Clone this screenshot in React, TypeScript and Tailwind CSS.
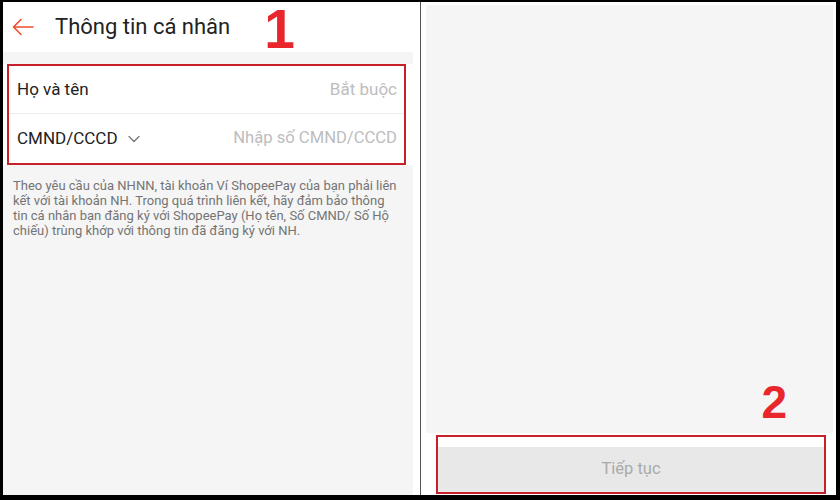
import React from "react";

export default function App() {
  return (
    <div className="w-[840px] h-[500px] bg-black flex pt-[2px] pl-[3px] pr-[4px] pb-[5px]" style={{ fontFamily: "Roboto, 'Noto Sans', sans-serif" }}>
      {/* Left panel */}
      <div className="w-[417px] h-full bg-white flex flex-col pr-[7px]">
        <div className="h-[50px] flex items-center shrink-0">
          <svg className="ml-[8px]" width="24" height="20" viewBox="0 0 24 20" fill="none" stroke="#ee4d2d" strokeWidth="1.6" strokeLinecap="round" strokeLinejoin="round">
            <path d="M22 10H2.5M10 2.5L2.5 10L10 17.5" />
          </svg>
          <span className="ml-[20px] text-[22px] text-[#222] leading-none">Thông tin cá nhân</span>
          <span className="ml-[34px] mt-[3px] text-[55px] font-bold text-[#e8262b] leading-[44px]" style={{ fontFamily: "'Liberation Sans', Arial, sans-serif" }}>1</span>
        </div>
        <div className="h-[12px] bg-[#f5f5f5] shrink-0" />
        <div className="flex-1 bg-[#f5f5f5] flex flex-col">
          <div className="bg-white pl-[4px] pr-[7px] shrink-0">
            <div className="border-[2px] border-[#c8202a] bg-white h-[101px] flex flex-col">
              <div className="h-[48px] flex items-center justify-between pl-[8px] pr-[7px] border-b border-[#ececec]">
                <span className="text-[17px] text-[#222]">Họ và tên</span>
                <span className="text-[17px] text-[#bdbdbd]">Bắt buộc</span>
              </div>
              <div className="flex-1 flex items-center justify-between pl-[8px] pr-[7px]">
                <div className="flex items-center">
                  <span className="text-[17px] text-[#222]">CMND/CCCD</span>
                  <svg className="ml-[10px]" width="12" height="8" viewBox="0 0 12 8" fill="none" stroke="#777" strokeWidth="1.3" strokeLinecap="round" strokeLinejoin="round">
                    <path d="M1 1.5L6 6.5L11 1.5" />
                  </svg>
                </div>
                <span className="text-[16.6px] text-[#bdbdbd]">Nhập số CMND/CCCD</span>
              </div>
            </div>
          </div>
          <p className="mt-[13px] pl-[10px] pr-[4px] text-[13px] leading-[15px] text-[#747474] whitespace-nowrap">
            Theo yêu cầu của NHNN, tài khoản Ví ShopeePay của bạn phải liên
            <br />
            kết với tài khoản NH. Trong quá trình liên kết, hãy đảm bảo thông
            <br />
            tin cá nhân bạn đăng ký với ShopeePay (Họ tên, Số CMND/ Số Hộ
            <br />
            chiếu) trùng khớp với thông tin đã đăng ký với NH.
          </p>
        </div>
      </div>
      {/* Divider */}
      <div className="w-[1px] h-full bg-[#555]" />
      {/* Right panel */}
      <div className="flex-1 h-full bg-white flex flex-col pt-[3px]">
        <div className="flex-1 bg-[#f5f5f5] ml-[5px] mr-[3px] flex items-end justify-end">
          <span className="mr-[46px] mb-[13px] text-[46px] font-bold text-[#e8262b] leading-[36px]" style={{ fontFamily: "'Liberation Sans', Arial, sans-serif" }}>2</span>
        </div>
        <div className="h-[62px] shrink-0 bg-white pt-[2px] pb-[1px] pl-[15px] pr-[10px]">
          <div className="h-full border-[2px] border-[#c8202a] bg-white flex flex-col">
            <div className="h-[10px] bg-white" />
            <div className="flex-1 bg-[#e8e8e8] flex items-center justify-center">
              <span className="text-[16.5px] text-[#aaa]">Tiếp tục</span>
            </div>
          </div>
        </div>
      </div>
    </div>
  );
}
